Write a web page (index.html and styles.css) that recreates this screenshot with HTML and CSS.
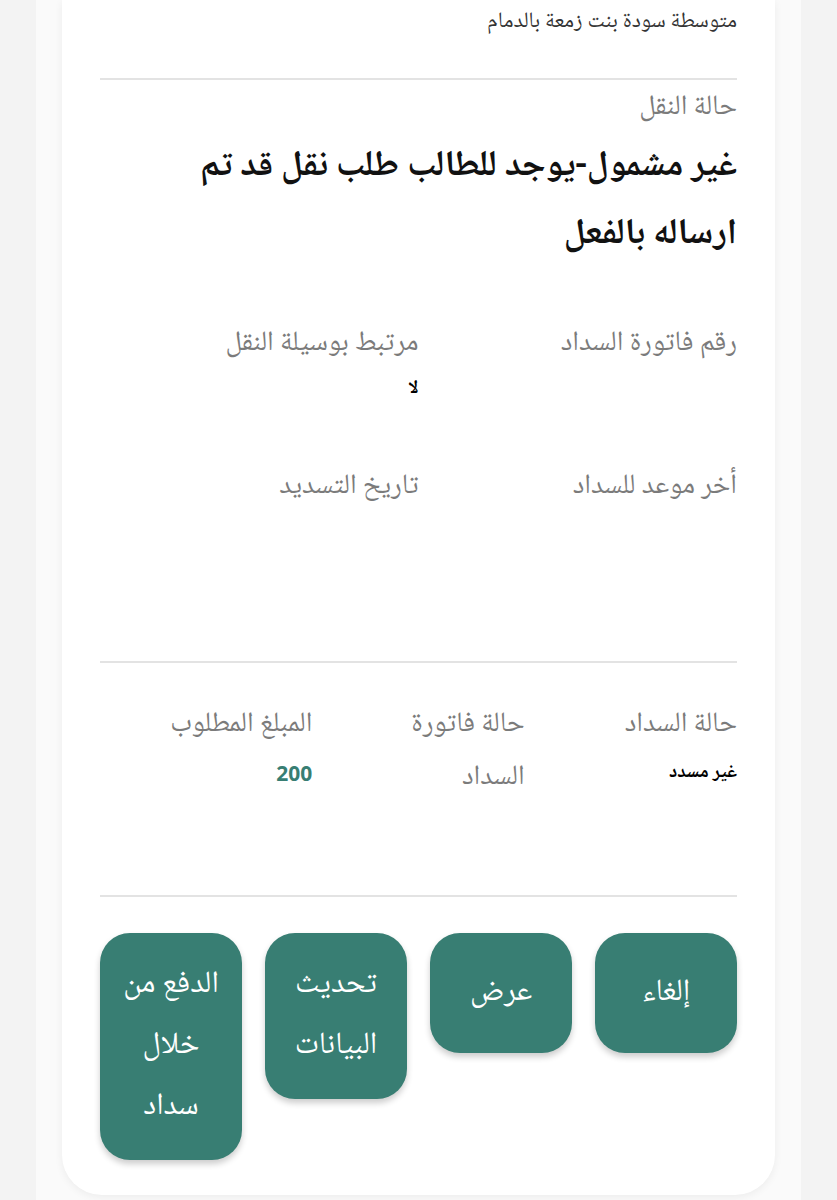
FILE: index.html
```html
<!DOCTYPE html>
<html lang="ar" dir="rtl">
<head>
    <meta charset="UTF-8">
    <meta name="viewport" content="width=device-width, initial-scale=1.0">
    <title>تفاصيل الطالب</title>
    <link rel="stylesheet" href="styles.css">
</head>
<body>
<div class="page">
    <div class="shell">
        <section class="card">
            <p class="school">متوسطة سودة بنت زمعة بالدمام</p>
            <hr class="divider">

            <div class="transfer">
                <p class="label">حالة النقل</p>
                <h2 class="transfer-status">غير مشمول-يوجد للطالب طلب نقل قد تم ارساله بالفعل</h2>
            </div>

            <div class="info-grid">
                <div class="info-item">
                    <p class="label">رقم فاتورة السداد</p>
                    <p class="value"></p>
                </div>
                <div class="info-item">
                    <p class="label">مرتبط بوسيلة النقل</p>
                    <p class="value">لا</p>
                </div>
                <div class="info-item">
                    <p class="label">أخر موعد للسداد</p>
                    <p class="value"></p>
                </div>
                <div class="info-item">
                    <p class="label">تاريخ التسديد</p>
                    <p class="value"></p>
                </div>
            </div>

            <hr class="divider">

            <div class="pay-grid">
                <div class="info-item">
                    <p class="label">حالة السداد</p>
                    <p class="value">غير مسدد</p>
                </div>
                <div class="info-item">
                    <p class="label">حالة فاتورة السداد</p>
                </div>
                <div class="info-item">
                    <p class="label">المبلغ المطلوب</p>
                    <p class="value amount">200</p>
                </div>
            </div>

            <hr class="divider">

            <div class="actions">
                <button type="button" class="btn">إلغاء</button>
                <button type="button" class="btn">عرض</button>
                <button type="button" class="btn">تحديث البيانات</button>
                <button type="button" class="btn">الدفع من خلال سداد</button>
            </div>
        </section>
    </div>
</div>
</body>
</html>
```

FILE: styles.css
```css
:root {
    --bg: #f3f3f3;
    --shell: #fafafa;
    --card: #ffffff;
    --line: #e3e3e3;
    --label: #7b7b7b;
    --text: #111111;
    --teal: #387e73;
}
body {
    margin: 0;
    padding: 0;
    background-color: var(--bg);
    font-family: "Noto Naskh Arabic", "Noto Sans Arabic", "DejaVu Sans", sans-serif;
    color: var(--text);
}
p, h2 {
    margin: 0;
}
.page {
    padding: 0 36px;
}
.shell {
    background-color: var(--shell);
    padding: 0 26px 5px;
}
.card {
    background-color: var(--card);
    border-radius: 0 0 40px 40px;
    box-shadow: 0 2px 8px rgba(0, 0, 0, 0.06);
    padding: 6px 38px 35px;
}
.school {
    font-size: 22px;
    line-height: 32px;
    color: #333;
}
.divider {
    border: none;
    height: 2px;
    background-color: var(--line);
    margin: 40px 0 0;
}
.transfer {
    padding-top: 8px;
}
.label {
    font-size: 28px;
    line-height: 40px;
    color: var(--label);
}
.transfer-status {
    max-width: 560px;
    font-size: 36px;
    font-weight: bold;
    line-height: 68px;
    margin-top: 6px;
}
.info-grid {
    display: grid;
    grid-template-columns: 1fr 1fr;
    row-gap: 64px;
    margin-top: 54px;
}
.value {
    font-size: 19px;
    font-weight: bold;
    line-height: 28px;
    min-height: 28px;
    margin-top: 11px;
    color: #000;
}
.info-grid + .divider {
    margin-top: 115px;
}
.pay-grid {
    display: grid;
    grid-template-columns: repeat(3, 1fr);
    padding-top: 36px;
}
.pay-grid .info-item {
    padding-left: 50px;
}
.pay-grid .label {
    line-height: 53px;
}
.pay-grid .value {
    margin-top: 7px;
}
.amount {
    color: var(--teal);
    font-size: 21px;
    font-family: "Open Sans", sans-serif;
}
.pay-grid + .divider {
    margin-top: 90px;
}
.actions {
    display: flex;
    gap: 23px;
    align-items: flex-start;
    margin-top: 36px;
}
.btn {
    flex: 1;
    display: flex;
    align-items: center;
    justify-content: center;
    min-height: 120px;
    padding: 22px 12px;
    border: none;
    border-radius: 30px;
    background-color: var(--teal);
    color: #fff;
    font-family: inherit;
    font-size: 31px;
    line-height: 61px;
    text-align: center;
    box-shadow: 0 4px 6px rgba(0, 0, 0, 0.2);
}
```
